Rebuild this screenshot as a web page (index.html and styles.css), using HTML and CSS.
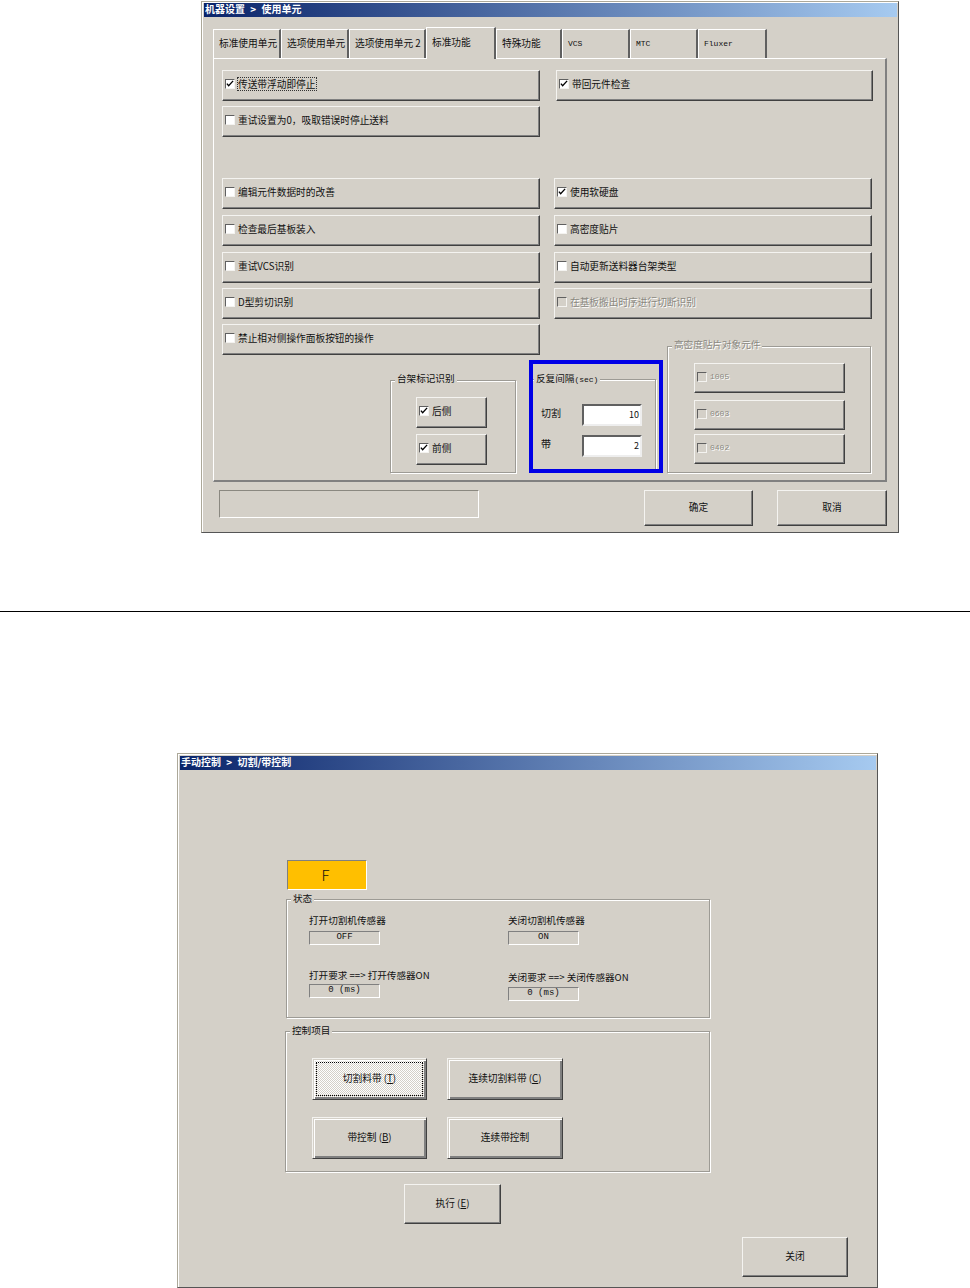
FILE: index.html
```html
<!DOCTYPE html>
<html lang="zh-CN">
<head>
<meta charset="utf-8">
<title>机器设置</title>
<link rel="stylesheet" href="styles.css">
</head>
<body>
<section class="dialog dialog-units">
  <div class="titlebar">机器设置 &gt; 使用单元</div>
  <div class="tabs">
    <div class="tab w68">标准使用单元</div>
    <div class="tab w68">选项使用单元</div>
    <div class="tab w77">选项使用单元 2</div>
    <div class="tab active w70">标准功能</div>
    <div class="tab w66">特殊功能</div>
    <div class="tab w68 lat">VCS</div>
    <div class="tab w68 lat">MTC</div>
    <div class="tab w69 lat">Fluxer</div>
  </div>
  <div class="panel">
    <div class="options">
      <div class="opt"><span class="cb"><svg class="check" viewBox="0 0 9 9"><path d="M1 4l2 2.5L8 1"/></svg></span><span class="focus-label">传送带浮动即停止</span></div>
      <div class="opt shift"><span class="cb"><svg class="check" viewBox="0 0 9 9"><path d="M1 4l2 2.5L8 1"/></svg></span><span>带回元件检查</span></div>
      <div class="opt"><span class="cb"></span><span>重试设置为0，吸取错误时停止送料</span></div>
      <div class="empty"></div>
      <div class="opt"><span class="cb"></span><span>编辑元件数据时的改善</span></div>
      <div class="opt"><span class="cb"><svg class="check" viewBox="0 0 9 9"><path d="M1 4l2 2.5L8 1"/></svg></span><span>使用软硬盘</span></div>
      <div class="opt"><span class="cb"></span><span>检查最后基板装入</span></div>
      <div class="opt"><span class="cb"></span><span>高密度贴片</span></div>
      <div class="opt"><span class="cb"></span><span>重试VCS识别</span></div>
      <div class="opt"><span class="cb"></span><span>自动更新送料器台架类型</span></div>
      <div class="opt"><span class="cb"></span><span>D型剪切识别</span></div>
      <div class="opt disabled"><span class="cb"></span><span>在基板搬出时序进行切断识别</span></div>
      <div class="opt last"><span class="cb"></span><span>禁止相对侧操作面板按钮的操作</span></div>
      <div class="groups">
        <div class="group rack">
          <span class="legend">台架标记识别</span>
          <div class="opt"><span class="cb"><svg class="check" viewBox="0 0 9 9"><path d="M1 4l2 2.5L8 1"/></svg></span><span>后侧</span></div>
          <div class="opt"><span class="cb"><svg class="check" viewBox="0 0 9 9"><path d="M1 4l2 2.5L8 1"/></svg></span><span>前侧</span></div>
        </div>
        <div class="highlight">
          <div class="group interval">
            <span class="legend">反复间隔<span class="lat">(sec)</span></span>
            <div class="field"><span class="field-label">切割</span><span class="input">10</span></div>
            <div class="field"><span class="field-label">带</span><span class="input">2</span></div>
          </div>
          <div class="highlight-frame"></div>
        </div>
        <div class="group density disabled">
          <span class="legend">高密度贴片对象元件</span>
          <div class="opt spaced"><span class="cb"></span><span class="lat">1005</span></div>
          <div class="opt"><span class="cb"></span><span class="lat">0603</span></div>
          <div class="opt"><span class="cb"></span><span class="lat">0402</span></div>
        </div>
      </div>
    </div>
  </div>
  <div class="footer">
    <div class="statusbox"></div>
    <button class="btn ok">确定</button>
    <button class="btn cancel">取消</button>
  </div>
</section>

<hr class="divider">

<section class="dialog dialog-manual">
  <div class="titlebar">手动控制 &gt; 切割/带控制</div>
  <div class="manual-body">
    <div class="flag">F</div>
    <div class="group status">
      <span class="legend">状态</span>
      <div class="stat-col">
        <div class="stat-label">打开切割机传感器</div>
        <div class="readout lat">OFF</div>
        <div class="stat-label second">打开要求 ==&gt; 打开传感器ON</div>
        <div class="readout lat">0 (ms)</div>
      </div>
      <div class="stat-col">
        <div class="stat-label">关闭切割机传感器</div>
        <div class="readout lat">ON</div>
        <div class="stat-label third">关闭要求 ==&gt; 关闭传感器ON</div>
        <div class="readout lat">0 (ms)</div>
      </div>
    </div>
    <div class="group control">
      <span class="legend">控制项目</span>
      <button class="btn thick focused">切割料带 (<u>T</u>)</button>
      <button class="btn thick">连续切割料带 (<u>C</u>)</button>
      <button class="btn thick">带控制 (<u>B</u>)</button>
      <button class="btn thick">连续带控制</button>
    </div>
    <button class="btn execute">执行 (<u>E</u>)</button>
    <button class="btn close">关闭</button>
  </div>
</section>
</body>
</html>
```
FILE: styles.css
```css
* { box-sizing: border-box; }
html, body { margin: 0; padding: 0; background: #fff; }
body {
  font-family: "Noto Sans CJK SC", "Liberation Sans", sans-serif;
  font-size: 10px;
  line-height: 12px;
  color: #111;
  height: 1288px;
  overflow: hidden;
}
.lat { font-family: "Liberation Mono", "Noto Sans CJK SC", monospace; font-size: 8px; }

.dialog {
  background: #d4d0c8;
  border: 1px solid;
  border-color: #aca899 #555 #555 #aca899;
  padding: 1px 1px 0 2px;
  box-shadow: inset 1px 1px #fff;
}
.dialog-units { width: 698px; height: 532px; margin: 1px 0 0 201px; }
.dialog-manual { width: 701px; height: 535px; margin: 141px 0 0 177px; padding-top: 2px; }

.titlebar {
  height: 14px;
  line-height: 12px;
  padding-left: 1px;
  font-weight: 700;
  word-spacing: 3px;
  color: #fff;
  background: linear-gradient(90deg, #0a246a, #a6caf0);
}

.divider { height: 1px; margin: 78px 0 0; border: 0; background: #000; }

.tabs { display: flex; height: 31px; margin: 10px 0 0 9px; position: relative; z-index: 1; }
.tab {
  height: 29px;
  margin-top: 2px;
  padding: 7px 0 0 5px;
  font-size: 9.7px;
  white-space: nowrap;
  border: 1px solid #fff;
  border-width: 1px 2px 0 1px;
  border-right-color: #606060;
}
.tab.lat { font-size: 8px; padding-top: 8px; }
.tab.active { height: 32px; margin-top: 0; padding-top: 8px; background: #d4d0c8; }
.w66 { width: 66px; } .w68 { width: 68px; } .w69 { width: 69px; }
.w70 { width: 70px; } .w77 { width: 77px; }

.panel {
  width: 674px;
  height: 424px;
  margin-left: 9px;
  padding: 11px 0 0 8px;
  border: 1px solid #fff;
  border-right: 2px solid #808080;
  border-bottom: 2px solid #808080;
}
.options {
  display: grid;
  grid-template-columns: 318px 318px;
  grid-template-rows: 36px 72px 37px 37px 36px 36px 21px 128px;
  column-gap: 14px;
}
.opt {
  display: flex;
  align-items: center;
  gap: 3px;
  height: 31px;
  padding: 0 0 3px 2px;
  font-size: 9.7px;
  border: 1px solid;
  border-color: #f4f3f0 #404040 #404040 #f4f3f0;
  box-shadow: inset -1px -1px #808080;
}
.shift { margin-left: 2px; margin-right: -1px; }
.last { grid-column: 1; grid-row: 7 / span 2; }
.cb {
  width: 10px;
  height: 10px;
  flex: none;
  background: #fff;
  border: 1px solid;
  border-color: #606060 #f4f3f0 #f4f3f0 #606060;
}
.check { display: block; width: 8px; height: 8px; fill: none; stroke: #000; stroke-width: 1.5; }
.focus-label { outline: 1px dotted #333; }
.disabled { color: #8a8880; text-shadow: 1px 1px #fff; }
.disabled .cb { background: #d4d0c8; }

.groups {
  grid-column: 1 / -1;
  grid-row: 8;
  display: flex;
  justify-content: flex-end;
  align-items: flex-end;
  padding-right: 1px;
}
.group {
  position: relative;
  border: 1px solid #9d9b95;
  box-shadow: 1px 1px #fff, inset 1px 1px #fff;
}
.legend {
  position: absolute;
  top: -8px;
  left: 4px;
  padding: 0 2px;
  font-size: 9.6px;
  background: #d4d0c8;
  white-space: nowrap;
}
.rack .legend, .density .legend { top: -9px; }
.rack {
  width: 126px;
  height: 93px;
  margin-right: 13px;
  padding: 16px 0 0 25px;
  display: flex;
  flex-direction: column;
  gap: 6px;
}
.rack .opt { width: 71px; }
.highlight {
  position: relative;
  width: 134px;
  height: 113px;
  margin-right: 4px;
  padding-top: 19px;
}
.highlight-frame { position: absolute; inset: 0; border: 4px solid #0000e6; }
.interval { width: 127px; height: 93px; padding: 24px 0 0 11px; display: flex; flex-direction: column; gap: 9px; }
.field { display: flex; align-items: center; }
.field-label { width: 41px; padding-bottom: 4px; }
.input {
  width: 60px;
  height: 22px;
  padding: 3px 1px 0 0;
  text-align: right;
  background: #fff;
  border: 2px solid;
  border-color: #606060 #eee #eee #606060;
  font-size: 9px;
}
.density {
  width: 204px;
  height: 127px;
  padding: 16px 0 0 26px;
  display: flex;
  flex-direction: column;
  gap: 4px;
}
.density .opt { width: 151px; height: 30px; }
.density .opt.spaced { margin-bottom: 3px; }

.footer { display: flex; height: 36px; margin: 8px 0 0 15px; }
.statusbox {
  width: 260px;
  height: 28px;
  margin-right: 165px;
  border: 1px solid;
  border-color: #8a8880 #fff #fff #8a8880;
}
.btn {
  display: block;
  padding: 0 0 2px;
  font: inherit;
  font-size: 9.7px;
  color: inherit;
  background: #d4d0c8;
  border: 1px solid;
  border-color: #f4f3f0 #404040 #404040 #f4f3f0;
  box-shadow: inset -1px -1px #808080;
}
.ok { width: 109px; margin-right: 24px; }
.cancel { width: 110px; }

.manual-body {
  display: flex;
  flex-direction: column;
  align-items: flex-start;
  padding-left: 105px;
}
.flag {
  width: 80px;
  height: 30px;
  margin: 90px 0 0 2px;
  padding-right: 3px;
  text-align: center;
  font: 300 15px/27px "Noto Sans CJK SC", sans-serif;
  background: #ffbf00;
  border: 1px solid;
  border-color: #808080 #fff #fff #808080;
}
.status {
  width: 424px;
  height: 119px;
  margin: 9px 0 0 1px;
  padding: 13px 0 0 22px;
  display: flex;
}
.stat-col { width: 199px; }
.stat-label { height: 18px; white-space: nowrap; font-size: 9.6px; line-height: 14px; }
.stat-label.second { height: 16px; margin-top: 23px; }
.stat-label.third { height: 17px; margin-top: 25px; }
.readout {
  width: 71px;
  height: 14px;
  font-size: 9px;
  line-height: 11px;
  text-align: center;
  border: 1px solid;
  border-color: #808080 #fff #fff #808080;
}
.control {
  width: 425px;
  height: 141px;
  margin-top: 13px;
  padding: 26px 0 0 26px;
  display: grid;
  grid-template-columns: 115px 116px;
  grid-auto-rows: 42px;
  column-gap: 20px;
  row-gap: 17px;
  align-content: start;
}
.thick {
  box-shadow: inset 1px 1px #d4d0c8, inset 2px 2px #fff, inset -1px -1px #808080, inset -2px -2px #808080;
}
.focused {
  position: relative;
  background: repeating-conic-gradient(#fff 0 25%, #d4d0c8 0 50%) 0 0 / 2px 2px;
}
.focused::after {
  content: "";
  position: absolute;
  inset: 3px;
  border: 1px dotted #000;
}
.execute { width: 97px; height: 40px; margin: 12px 0 0 119px; }
.close { width: 106px; height: 40px; margin: 13px 0 0 457px; }
```
